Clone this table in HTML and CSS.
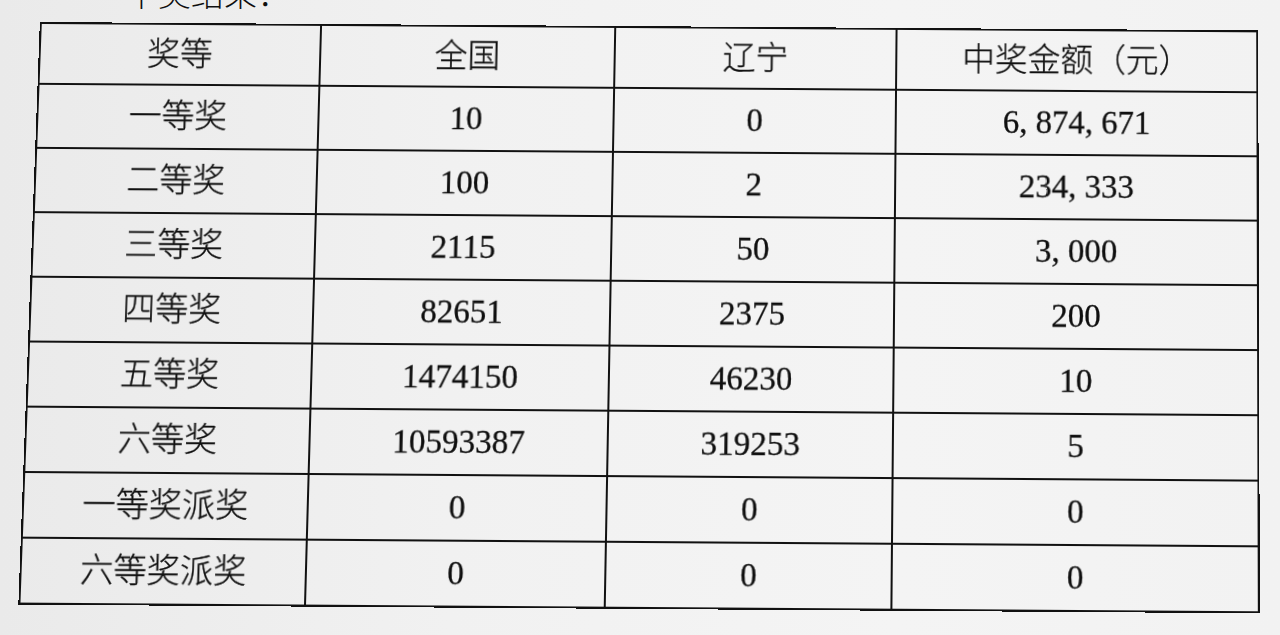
FILE: index.html
```html
<!DOCTYPE html>
<html lang="zh-CN">
<head>
<meta charset="utf-8">
<title>中奖结果</title>
<link rel="stylesheet" href="styles.css">
</head>
<body>
<main class="page">
  <div class="title">中奖结果：</div>
  <table class="prize">
    <colgroup>
      <col class="c1"><col class="c2"><col class="c3"><col class="c4">
    </colgroup>
    <tr class="head"><td>奖等</td><td>全国</td><td>辽宁</td><td>中奖金额（元）</td></tr>
    <tr><td>一等奖</td><td>10</td><td>0</td><td>6, 874, 671</td></tr>
    <tr><td>二等奖</td><td>100</td><td>2</td><td>234, 333</td></tr>
    <tr><td>三等奖</td><td>2115</td><td>50</td><td>3, 000</td></tr>
    <tr><td>四等奖</td><td>82651</td><td>2375</td><td>200</td></tr>
    <tr><td>五等奖</td><td>1474150</td><td>46230</td><td>10</td></tr>
    <tr><td>六等奖</td><td>10593387</td><td>319253</td><td>5</td></tr>
    <tr><td>一等奖派奖</td><td>0</td><td>0</td><td>0</td></tr>
    <tr><td>六等奖派奖</td><td>0</td><td>0</td><td>0</td></tr>
  </table>
</main>
</body>
</html>
```
FILE: styles.css
```css
html, body {
  margin: 0;
  padding: 0;
  width: 1280px;
  height: 635px;
  overflow: hidden;
}
body {
  background: linear-gradient(90deg, #eaeaea 0%, #f1f1f1 35%, #f4f4f4 70%, #f2f2f2 100%);
  color: #0f0f0f;
  font-family: "Liberation Serif", "Noto Sans CJK SC", serif;
}
.page {
  display: flex;
  flex-direction: column;
  padding-left: 29px;
}
.title {
  margin-top: -24px;
  height: 33px;
  line-height: 33px;
  padding-left: 96px;
  font-size: 33px;
  font-weight: 300;
  font-family: "Noto Sans CJK SC", sans-serif;
}
.prize {
  margin-top: 16px;
  width: 1228px;
  border-collapse: collapse;
  table-layout: fixed;
  font-size: 33px;
  font-weight: 300;
  transform-origin: 925px 50%;
  transform: perspective(2000px) rotateX(3.7deg) rotate(0.4deg);
}
.c1 { width: 283px; }
.c2 { width: 297px; }
.c3 { width: 284px; }
.c4 { width: 364px; }
.prize td {
  border: 2px solid #111;
  padding: 0;
  height: 63px;
  text-align: center;
  vertical-align: middle;
  line-height: 1;
  -webkit-text-stroke: 0.3px #0f0f0f;
}
.prize .head td {
  height: 60px;
}
```
